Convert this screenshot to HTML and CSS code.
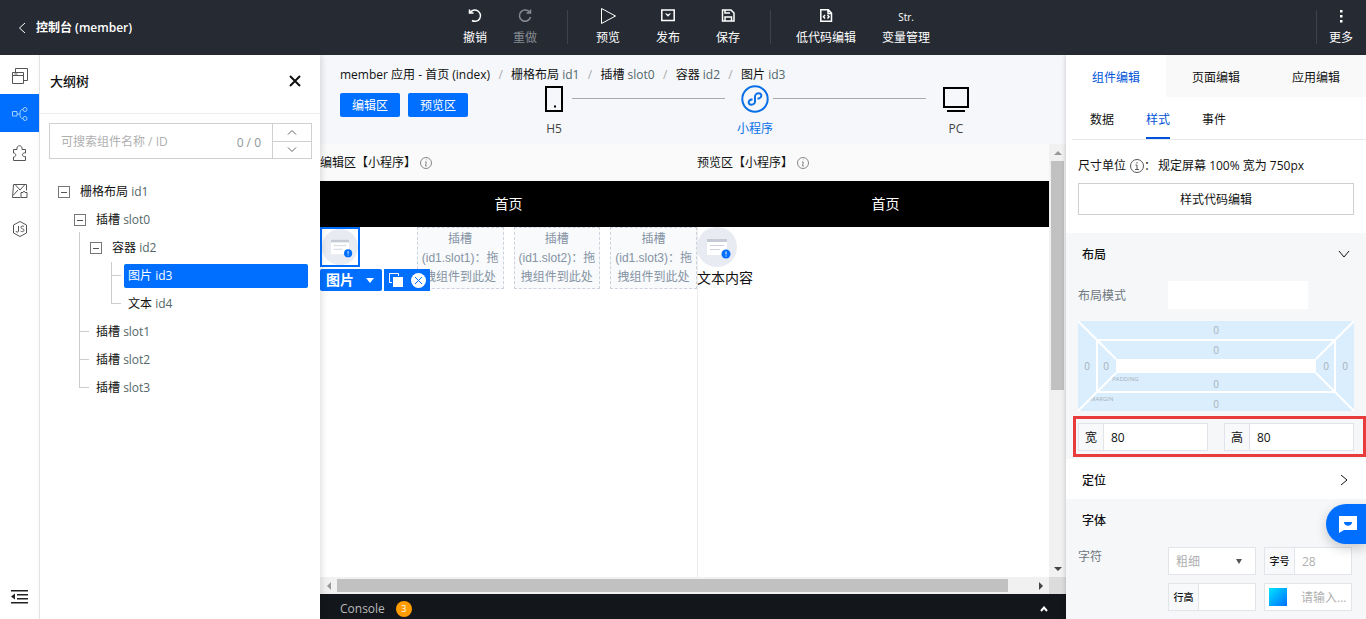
FILE: index.html
```html
<!DOCTYPE html>
<html lang="zh-CN">
<head>
<meta charset="utf-8">
<meta name="viewport" content="width=device-width, initial-scale=1">
<title>控制台 (member)</title>
<link rel="stylesheet" href="styles.css">
</head>
<body>
<header class="topbar">
  <a class="back" href="#">
    <svg width="8" height="12" viewBox="0 0 8 12" class="line"><path d="M7 1 1.500 6 7 11"/></svg>
    控制台 (member)
  </a>
  <nav class="tools">
    <div class="group tight">
      <button class="tool"><svg width="16" height="16" viewBox="0 0 16 16" class="line bold"><path d="M2.500 1.500v3.500h4M3 5A5.600 5.600 0 1 1 5 12.500"/></svg>撤销</button>
      <button class="tool" disabled><svg width="16" height="16" viewBox="0 0 16 16" class="line bold"><path d="M13.500 1.500v3.500h-4M13 5A5.600 5.600 0 1 0 13.500 9"/></svg>重做</button>
    </div>
    <div class="group">
      <button class="tool"><svg width="16" height="16" viewBox="0 0 16 16" class="line"><path d="M1.500.5 15.500 8l-14 7.500z"/></svg>预览</button>
      <button class="tool"><svg width="16" height="16" viewBox="0 0 16 16" class="line bold"><path d="M1.800 2h12.400v10.400H1.800z"/><path d="M5 5.500h1.500L8 6.500l1.500-1H11L8 8.800z" fill="currentColor" stroke="none"/></svg>发布</button>
      <button class="tool"><svg width="16" height="16" viewBox="0 0 16 16" class="line bold"><path d="M2.500 2h8.500L14 5v8H2.500zM5 2v3h5M5 13V9h6.500v4"/></svg>保存</button>
    </div>
    <div class="group tight">
      <button class="tool"><svg width="16" height="16" viewBox="0 0 16 16" class="line bold"><path d="M2.800 1.800h7.500L13.500 5v8.200H2.800zM10 2v3.500h3.500M7 7 5.500 8.800 7 10.500M9.500 7 11 8.800 9.500 10.500"/></svg>低代码编辑</button>
      <button class="tool"><span class="str">Str.</span>变量管理</button>
    </div>
  </nav>
  <div class="more">
    <button class="tool"><svg width="16" height="16" viewBox="0 0 16 16" fill="currentColor"><path d="M7 2h2.500v2.500H7zM7 7h2.500v2.500H7zM7 12h2.500v2.500H7z"/></svg>更多</button>
  </div>
</header>

<div class="workspace">
  <nav class="rail">
    <button class="rail-item" aria-label="页面"><svg width="16" height="16" viewBox="0 0 16 16" class="line"><path d="M.5 4.500h11v11H.5zM.5 7.500h11M2.500 6h3M3.500 4.500v-4h12v12h-4"/></svg></button>
    <button class="rail-item active" aria-label="大纲树"><svg width="16" height="16" viewBox="0 0 16 16" class="line"><path d="M.5 5.500h4.500v4.500H.5zM5 8h3M11 3.500C8.500 3.500 8 5 8 8s.5 4.500 3 4.500"/><circle cx="13" cy="3.500" r="2"/><circle cx="13" cy="12.500" r="2"/></svg></button>
    <button class="rail-item" aria-label="组件"><svg width="16" height="16" viewBox="0 0 16 16" class="line"><path d="M1.500 4.500H5c-1-5 6-5 5 0h3.500V8c-4-1-4 4.500 0 3.500v4h-12V12c3 0 3-4 0-4z"/></svg></button>
    <button class="rail-item" aria-label="素材"><svg width="16" height="16" viewBox="0 0 16 16" class="line"><path d="M1.500 1.500h13v6M1.500 1.500.5 14.500h8M3.500 2l4.500 5 4.500-5M1 12.500 6 7M9 9.500h2l1-1.500 1 1.500h2v5H9z"/></svg></button>
    <button class="rail-item" aria-label="脚本"><svg width="16" height="16" viewBox="0 0 16 16" class="line"><path d="M8 .5 14.500 4v8L8 15.500 1.500 12V4zM6.500 5v5c0 1.500-2.500 1.500-2.500 0M12 5.500c-1-.8-3-.6-3 .8 0 2 3 1 3 3 0 1.500-2.500 1.700-3.500.7"/></svg></button>
    <button class="rail-item last" aria-label="收起"><svg width="17" height="16" viewBox="0 0 17 16" fill="currentColor"><path d="M0 1h17v1.500H0zM6 5h11v1.500H6zM6 9h11v1.500H6zM0 13h17v1.500H0zM4 4.500v6L0 7.500z"/></svg></button>
  </nav>

  <aside class="outline">
    <div class="outline-head">
      <h2>大纲树</h2>
      <button class="close" aria-label="关闭"><svg width="12" height="12" viewBox="0 0 12 12" class="line heavy"><path d="M1 1l10 10M11 1 1 11"/></svg></button>
    </div>
    <div class="search">
      <input type="text" aria-label="搜索组件" placeholder="可搜索组件名称 / ID">
      <span class="count">0 / 0</span>
      <div class="steps">
        <button aria-label="上一个"><svg width="10" height="6" viewBox="0 0 10 6" class="line"><path d="M1 5.500 5 1.500l4 4"/></svg></button>
        <button aria-label="下一个"><svg width="10" height="6" viewBox="0 0 10 6" class="line"><path d="M1 .5l4 4 4-4"/></svg></button>
      </div>
    </div>
    <ul class="tree">
      <li>
        <div class="node"><button class="toggle" aria-label="折叠"></button><span class="label">栅格布局 <i>id1</i></span></div>
        <ul>
          <li class="linked open">
            <div class="node"><button class="toggle" aria-label="折叠"></button><span class="label">插槽 <i>slot0</i></span></div>
            <ul>
              <li>
                <div class="node"><button class="toggle" aria-label="折叠"></button><span class="label">容器 <i>id2</i></span></div>
                <ul>
                  <li class="linked leaf"><div class="node"><span class="label selected">图片 <i>id3</i></span></div></li>
                  <li class="linked leaf"><div class="node"><span class="label">文本 <i>id4</i></span></div></li>
                </ul>
              </li>
            </ul>
          </li>
          <li class="linked leaf"><div class="node"><span class="label">插槽 <i>slot1</i></span></div></li>
          <li class="linked leaf"><div class="node"><span class="label">插槽 <i>slot2</i></span></div></li>
          <li class="linked leaf"><div class="node"><span class="label">插槽 <i>slot3</i></span></div></li>
        </ul>
      </li>
    </ul>
  </aside>

  <main class="stage">
    <div class="context">
      <nav class="crumbs">
        <a href="#">member 应用 - 首页 (index)</a><b>/</b><a href="#">栅格布局 <i>id1</i></a><b>/</b><a href="#">插槽 <i>slot0</i></a><b>/</b><a href="#">容器 <i>id2</i></a><b>/</b><a href="#">图片 <i>id3</i></a>
      </nav>
      <div class="context-row">
        <div class="areas"><button class="primary">编辑区</button><button class="primary">预览区</button></div>
        <div class="devices">
          <button class="device"><svg width="28" height="28" viewBox="0 0 28 28" class="ink"><path d="M6 2h16v24H6z"/><path d="M14 21.500h2" /></svg>H5</button>
          <span class="track"></span>
          <button class="device current"><svg width="28" height="28" viewBox="0 0 28 28" class="ink"><circle cx="14" cy="14" r="12.700"/><path d="M11.500 14.200c-5 .8-4.800 5.500-1.200 5.500 2 0 3.700-1.300 3.700-3.200v-5c0-1.900 1.700-3.200 3.700-3.200 3.600 0 3.800 4.700-1.200 5.500"/></svg>小程序</button>
          <span class="track"></span>
          <button class="device"><svg width="28" height="28" viewBox="0 0 28 28" class="ink"><path d="M2 3h24v19H2zM5 26h18"/></svg>PC</button>
        </div>
      </div>
    </div>

    <div class="viewport">
      <div class="frames">
        <section class="frame">
          <div class="frame-title">编辑区【小程序】<svg width="12" height="12" viewBox="0 0 12 12" class="line"><circle cx="6" cy="6" r="5.500"/><path d="M6.800 2.800h-.6M5 5h1.300L5.500 9H7"/></svg></div>
          <div class="phone-bar">首页</div>
          <div class="phone edit">
            <div class="cell">
              <div class="picked">
                <svg class="picture" viewBox="0 0 40 40"><circle cx="20" cy="20" r="20" fill="#e9ebf3"/><path d="M10 12h20v3H10z" fill="#c6cad4"/><path d="M10 15h20v13H10z" fill="#fff"/><path d="M13 18.500h14M13 22.500h10" stroke="#ccd2df"/><circle cx="29" cy="27" r="4.500" fill="#006eff"/><path d="M29 24.500v3M29 28.500v1" stroke="#fff"/></svg>
              </div>
              <div class="actions">
                <button class="kind">图片<svg width="8" height="5" viewBox="0 0 8 5" fill="currentColor"><path d="M0 0h8L4 5z"/></svg></button>
                <div class="ops">
                  <button aria-label="复制"><svg width="14" height="14" viewBox="0 0 14 14"><path d="M.5.5h9v9h-9z" fill="none" stroke="#fff"/><path d="M3 3h11v11H3z" fill="#006eff"/><path d="M4 4h10v10H4z" fill="#fff"/></svg></button>
                  <button aria-label="删除"><svg width="15" height="15" viewBox="0 0 15 15"><circle cx="7.500" cy="7.500" r="7.500" fill="#fff"/><path d="M4 4l7 7M11 4l-7 7" stroke="#006eff"/></svg></button>
                </div>
              </div>
            </div>
            <div class="slot">插槽(id1.slot1)：拖拽组件到此处</div>
            <div class="slot">插槽(id1.slot2)：拖拽组件到此处</div>
            <div class="slot">插槽(id1.slot3)：拖拽组件到此处</div>
          </div>
        </section>
        <section class="frame">
          <div class="frame-title">预览区【小程序】<svg width="12" height="12" viewBox="0 0 12 12" class="line"><circle cx="6" cy="6" r="5.500"/><path d="M6.800 2.800h-.6M5 5h1.300L5.500 9H7"/></svg></div>
          <div class="phone-bar">首页</div>
          <div class="phone preview">
            <svg class="picture" viewBox="0 0 40 40"><circle cx="20" cy="20" r="20" fill="#e9ebf3"/><path d="M10 12h20v3H10z" fill="#c6cad4"/><path d="M10 15h20v13H10z" fill="#fff"/><path d="M13 18.500h14M13 22.500h10" stroke="#ccd2df"/><circle cx="29" cy="27" r="4.500" fill="#006eff"/><path d="M29 24.500v3M29 28.500v1" stroke="#fff"/></svg>
            <p>文本内容</p>
          </div>
        </section>
      </div>
      <div class="bar vertical"><span class="arrow up"></span><span class="thumb"></span><span class="arrow down"></span></div>
      <div class="bar horizontal"><span class="arrow left"></span><span class="thumb"></span><span class="arrow right"></span></div>
      <div class="corner"></div>
    </div>

    <footer class="console">
      <span>Console</span><span class="badge">3</span>
      <button aria-label="展开"><svg width="8" height="6" viewBox="0 0 8 6" class="line heavy"><path d="M1 5l3-3.500L7 5"/></svg></button>
    </footer>
  </main>

  <aside class="inspector">
    <div class="tabs"><button class="tab on">组件编辑</button><button class="tab">页面编辑</button><button class="tab">应用编辑</button></div>
    <div class="subtabs"><button>数据</button><button class="on">样式</button><button>事件</button></div>
    <div class="unit">
      <p>尺寸单位<svg width="14" height="14" viewBox="0 0 14 14" class="line"><circle cx="7" cy="7" r="6.500"/><path d="M7 3v1.500M5.500 6H7v4.500M5 10.500h4"/></svg><span class="colon">：</span>规定屏幕 100% 宽为 750px</p>
      <button class="plain">样式代码编辑</button>
    </div>
    <section class="layout">
      <button class="section-head">布局<svg width="12" height="12" viewBox="0 0 12 12" class="line"><path d="M1 2l5 6 5-6"/></svg></button>
      <div class="field"><label for="mode">布局模式</label><input id="mode" class="mode" type="text"></div>
      <div class="boxmodel">
        <svg viewBox="0 0 276 90" preserveAspectRatio="none"><path d="M0 0 38 38M276 0l-38 38M0 90l38-38M276 90l-38-38" stroke="#fff" stroke-width="2"/><path d="M19 19h238v52H19z" fill="none" stroke="#fff" stroke-width="2"/><path d="M38 38h200v14H38z" fill="#fff"/></svg>
        <span class="mt">0</span><span class="pt">0</span><span class="ml">0</span><span class="pl">0</span><span class="pr">0</span><span class="mr">0</span><span class="pb">0</span><span class="mb">0</span>
        <small class="padding-name">PADDING</small><small class="margin-name">MARGIN</small>
      </div>
      <div class="size">
        <div class="addon"><label for="w">宽</label><input id="w" type="text" value="80"></div>
        <div class="addon"><label for="h">高</label><input id="h" type="text" value="80"></div>
      </div>
    </section>
    <button class="section-head position">定位<svg width="12" height="12" viewBox="0 0 12 12" class="line"><path d="M3 0l6 5-6 5"/></svg></button>
    <section class="font">
      <button class="section-head">字体</button>
      <div class="font-row">
        <label for="weight">字符</label>
        <div class="font-grid">
          <div class="select"><select id="weight"><option>粗细</option></select></div>
          <div class="addon wide"><label for="fs">字号</label><input id="fs" type="text" placeholder="28"></div>
          <div class="addon wide"><label for="lh">行高</label><input id="lh" type="text"></div>
          <div class="addon color"><span class="swatch"></span><input type="text" aria-label="颜色" placeholder="请输入..."></div>
        </div>
      </div>
    </section>
  </aside>
</div>
<button class="chat" aria-label="客服"><svg width="18" height="17" viewBox="0 0 18 17"><path d="M0 0h18v14H5l-5 3z" fill="#fff"/><path d="M5 6h8c0 5-8 5-8 0z" fill="#006eff"/></svg></button>
</body>
</html>
```

FILE: styles.css
```css
* { box-sizing: border-box; }

body {
  margin: 0;
  height: 100vh;
  display: flex;
  flex-direction: column;
  overflow: hidden;
  font: 12px/18px "Open Sans", "Noto Sans CJK SC", sans-serif;
  color: #111;
  background: #fff;
}

button, input, select {
  font: inherit;
  color: inherit;
  margin: 0;
  padding: 0;
  border: 0;
  border-radius: 0;
  background: none;
  outline: 0;
}

button { white-space: nowrap; }
a { color: inherit; text-decoration: none; }
i { font-style: normal; color: #53686a; }
h2, p { margin: 0; }
svg { flex: none; display: block; }
input::placeholder { color: #b0b0b0; opacity: 1; }

.line { fill: none; stroke: currentColor; stroke-width: 1; }
.line.bold { stroke-width: 1.5; }
.line.heavy { stroke-width: 2; }
.ink { fill: none; stroke: currentColor; stroke-width: 2; }

/* top bar */
.topbar {
  flex: none;
  height: 55px;
  display: grid;
  grid-template-columns: 463px auto 1fr;
  background: #262b33;
  color: #fff;
}

.back {
  display: flex;
  align-items: center;
  gap: 10px;
  padding-left: 18px;
  font-weight: 600;
}

.tools { display: flex; align-items: center; }
.group { display: flex; gap: 36px; }
.group.tight { gap: 26px; }

.group + .group {
  margin-left: 30px;
  padding-left: 29px;
  position: relative;
}

.group + .group.tight { padding-left: 26px; }

.group + .group::before,
.more::before {
  content: "";
  position: absolute;
  left: 0;
  top: 2px;
  width: 1px;
  height: 34px;
  background: #3d434c;
}

.tool {
  display: flex;
  flex-direction: column;
  align-items: center;
  gap: 5px;
}

.tool:disabled { color: #858a92; }
.str { height: 16px; font-size: 10px; line-height: 18px; }

.more {
  position: relative;
  justify-self: end;
  align-self: center;
  padding: 0 13px;
}

.workspace { flex: 1; min-height: 0; display: flex; }

/* icon rail */
.rail {
  flex: none;
  width: 40px;
  display: flex;
  flex-direction: column;
  padding: 1px 0 4px;
  border-right: 1px solid #e8e8e8;
  color: #555;
}

.rail-item {
  height: 38px;
  display: flex;
  align-items: center;
  justify-content: center;
  padding-top: 2px;
}

.rail-item.active { margin-bottom: 1px; background: #006eff; color: #9fd0ff; }
.rail-item.last { margin-top: auto; color: #222; }

/* outline */
.outline {
  flex: none;
  width: 280px;
  z-index: 1;
  background: #fff;
  box-shadow: 2px 0 6px rgba(0, 0, 0, .12);
}

.outline-head {
  height: 59px;
  display: flex;
  align-items: center;
  justify-content: space-between;
  padding: 0 19px 7px 10px;
  border-bottom: 1px solid #ececec;
}

.outline-head h2 { font-size: 13px; font-weight: 500; }

.search {
  display: flex;
  height: 36px;
  margin: 9px 8px 19px 9px;
  border: 1px solid #cfd0d1;
}

.search input { flex: 1; min-width: 0; padding: 2px 0 0 11px; }
.count { padding: 1px 11px 0; line-height: 36px; color: #8b979c; }

.steps {
  width: 39px;
  display: flex;
  flex-direction: column;
  border-left: 1px solid #cfd0d1;
  color: #666;
}

.steps button { flex: 1; display: grid; place-items: center; }
.steps button + button { border-top: 1px solid #cfd0d1; }

.tree, .tree ul { list-style: none; margin: 0; padding: 0; }
.tree { padding: 0 12px 0 18px; }
.tree ul { padding-left: 16px; }
.tree li { position: relative; }
.node { display: flex; align-items: center; height: 28px; }

.toggle {
  width: 12px;
  height: 12px;
  margin-right: 6px;
  display: grid;
  place-items: center;
  border: 1px solid #777;
}

.toggle::after { content: ""; width: 6px; height: 1px; background: #555; }
.label { flex: 1; padding: 0 4px; line-height: 24px; border-radius: 2px; }
.leaf .label { margin-left: 18px; }
.selected, .selected i { background: #006eff; color: #fff; }

.linked::before {
  content: "";
  position: absolute;
  left: 5px;
  top: 0;
  bottom: 0;
  border-left: 1px solid #ccc;
}

.linked.open::before { top: 26px; }
.linked.leaf:last-child::before { bottom: 14px; }

.leaf::after {
  content: "";
  position: absolute;
  left: 5px;
  top: 13px;
  width: 10px;
  border-top: 1px solid #ccc;
}

/* stage */
.stage { flex: 1; min-width: 0; display: flex; flex-direction: column; }
.context { height: 89px; flex: none; padding: 11px 20px 0; background: #f5f7fa; }
.crumbs { display: flex; white-space: nowrap; }
.crumbs b { width: 21px; text-align: center; font-weight: 400; color: #aaa; }
.context-row { display: flex; justify-content: space-between; align-items: flex-start; }
.areas { display: flex; gap: 8px; padding-top: 9px; }

.primary {
  width: 60px;
  height: 24px;
  padding-top: 2px;
  border-radius: 2px;
  background: #006eff;
  color: #fff;
}

.devices { flex: 1; display: flex; margin: 1px 72px 0 68px; }

.device {
  width: 36px;
  display: flex;
  flex-direction: column;
  align-items: center;
  gap: 7px;
  color: #444;
}

.device svg { color: #000; }
.device.current, .device.current svg { color: #0a70e8; }
.track { flex: 1; margin: 13px 12px 0 0; border-top: 1px solid #aaa; }

.viewport {
  flex: 1;
  min-height: 0;
  display: grid;
  grid-template: 1fr 17px / 1fr 17px;
}

.frames { display: flex; min-width: 0; overflow: hidden; }
.frame { flex: 0 0 377px; display: flex; flex-direction: column; }

.frame-title {
  height: 37px;
  display: flex;
  align-items: center;
  gap: 4px;
  padding-top: 1px;
  background: #fafafa;
}

.frame-title svg { color: #888; }

.phone-bar {
  height: 46px;
  line-height: 46px;
  text-align: center;
  font-size: 14px;
  color: #fff;
  background: #000;
}

.phone { flex: 1; font-family: "Liberation Sans", "Noto Sans CJK SC", sans-serif; }

.edit {
  display: grid;
  grid-template-columns: repeat(4, 1fr);
  align-items: start;
  gap: 10px;
}

.preview { box-shadow: inset 1px 0 #ececec; }
.preview p { font-size: 14px; line-height: 22px; }
.picture { width: 40px; height: 40px; }
.cell { position: relative; }
.picked { width: 40px; height: 40px; border: 2px solid #006eff; }
.picked .picture { width: 36px; height: 36px; }

.slot {
  height: 62px;
  padding: 2px 4px 0;
  border: 1px dashed #cdd3dc;
  background: #f9fafc;
  line-height: 19px;
  text-align: center;
  color: #8493a3;
}

.actions {
  position: absolute;
  left: 0;
  top: 42px;
  display: flex;
  gap: 2px;
  height: 22px;
}

.actions button { display: flex; align-items: center; color: #fff; }

.actions .kind {
  gap: 12px;
  padding: 0 8px 0 6px;
  border-radius: 2px;
  background: #006eff;
  font-size: 14px;
  font-weight: 700;
}

.ops { display: flex; gap: 8px; padding: 0 4px 0 5px; background: #006eff; }

.bar { display: flex; align-items: center; background: #f1f1f1; }
.vertical { flex-direction: column; }
.thumb { background: #c1c1c1; }
.vertical .thumb { width: 13px; height: 53%; margin: 0 0 auto; }
.horizontal .thumb { width: 92%; height: 13px; margin-right: auto; }
.arrow { width: 17px; height: 17px; display: grid; place-items: center; }
.arrow::before { content: ""; border: 4px solid transparent; }
.up::before { border-top: 0; border-bottom-color: #999; }
.down::before { border-bottom: 0; border-top-color: #444; }
.left::before { border-left: 0; border-right-color: #999; }
.right::before { border-right: 0; border-left-color: #444; }
.corner { background: #dcdcdc; }

.console {
  flex: none;
  height: 25px;
  display: flex;
  align-items: center;
  gap: 11px;
  padding: 5px 18px 0 20px;
  background: #13161a;
  color: #b8b8b8;
}

.badge {
  width: 16px;
  height: 16px;
  border-radius: 50%;
  background: #ff9d00;
  color: #fff;
  font-size: 9px;
  line-height: 16px;
  text-align: center;
}

.console button { margin-left: auto; color: #fff; }

/* inspector */
.inspector {
  flex: none;
  width: 300px;
  z-index: 1;
  overflow: hidden;
  background: #fff;
  box-shadow: -1px 0 4px rgba(0, 0, 0, .15);
}

.tabs { display: flex; height: 42px; }
.tab { flex: 1; padding-top: 4px; background: #f9f9f9; }
.tab.on { background: #fff; }
.tab.on, .subtabs .on { color: #0052d9; }

.subtabs {
  display: flex;
  gap: 32px;
  height: 43px;
  margin-left: 6px;
  padding-left: 18px;
  border-bottom: 1px solid #e5e8ed;
}

.subtabs button { padding-top: 6px; border-bottom: 2px solid transparent; }
.subtabs .on { border-bottom-color: #0052d9; }
.unit { padding: 17px 12px 18px; }
.unit p { display: flex; align-items: center; margin-bottom: 8px; }
.unit svg { margin-left: 4px; color: #555; }
.colon { width: 14px; }
.plain { width: 100%; height: 32px; padding-top: 2px; border: 1px solid #cfd0d1; }
.layout, .font { background: #f5f7f9; }
.layout { padding-bottom: 2px; }

.section-head {
  width: 100%;
  height: 40px;
  display: flex;
  align-items: center;
  justify-content: space-between;
  padding: 4px 16px 0;
  font-weight: 500;
}

.field {
  display: grid;
  grid-template-columns: 90px 140px;
  align-items: center;
  padding: 8px 12px 12px;
  color: #707780;
}

.field label { padding-top: 2px; }
.mode { height: 28px; background: #fff; }

.boxmodel {
  position: relative;
  margin: 0 12px 5px;
  display: grid;
  grid-template: 18px 20px 14px 20px 18px / 18px 20px 1fr 20px 18px;
  place-items: center;
  background: #daeefd;
  font-size: 10px;
  line-height: 14px;
  color: #a8b1b8;
}

.boxmodel svg { position: absolute; inset: 0; width: 100%; height: 100%; }
.boxmodel span { position: relative; }
.mt { grid-area: 1 / 3; }
.pt { grid-area: 2 / 3; padding-top: 2px; }
.ml { grid-area: 3 / 1; }
.pl { grid-area: 3 / 2; }
.pr { grid-area: 3 / 4; }
.mr { grid-area: 3 / 5; }
.pb { grid-area: 4 / 3; padding-top: 2px; }
.mb { grid-area: 5 / 3; padding-top: 4px; }
.boxmodel small { font-size: 6px; line-height: 8px; }
.padding-name { grid-area: 4 / 3; place-self: start; margin: 2px 0 0 -4px; }
.margin-name { grid-area: 5 / 1 / 6 / 4; place-self: start; margin: 2px 0 0 12px; }

.size {
  display: grid;
  grid-template-columns: 1fr 1fr;
  gap: 16px;
  margin-left: 7px;
  padding: 4px 9px 3px 2px;
  border: 3px solid #e83b3b;
}

.addon {
  display: flex;
  height: 28px;
  min-width: 0;
  border: 1px solid #e1e5ea;
  background: #fff;
}

.addon label {
  flex: none;
  width: 25px;
  text-align: center;
  line-height: 28px;
  background: #f7f9fb;
  border-right: 1px solid #e1e5ea;
}

.addon input { flex: 1; width: 0; min-width: 0; padding: 2px 0 0 7px; }
.addon.wide label { width: 30px; font-size: 10px; font-weight: 500; line-height: 26px; }
.position { background: #fff; }

.font-row {
  display: grid;
  grid-template-columns: 90px 1fr;
  padding: 8px 14px 8px 12px;
  color: #707780;
}

.font-row > label { padding-top: 1px; }

.font-grid {
  display: grid;
  grid-template-columns: 1fr 1fr;
  gap: 8px;
  color: #111;
}

.select {
  position: relative;
  height: 28px;
  border: 1px solid #e1e5ea;
  background: #fff;
}

.select select {
  appearance: none;
  width: 100%;
  height: 100%;
  padding: 2px 0 0 7px;
  color: #b0b0b0;
}

.select::after {
  content: "";
  position: absolute;
  right: 13px;
  top: 11px;
  border: 3px solid transparent;
  border-top: 5px solid #555;
  border-bottom: 0;
}

.swatch {
  width: 18px;
  height: 18px;
  margin: 4px 7px 0 4px;
  background: linear-gradient(135deg, #00e5ff, #006eff);
}

.chat {
  position: fixed;
  z-index: 2;
  right: 0;
  bottom: 75px;
  width: 40px;
  height: 40px;
  padding-left: 13px;
  border-radius: 20px 0 0 20px;
  background: #006eff;
  box-shadow: 0 4px 12px rgba(0, 0, 0, .2);
}
```
